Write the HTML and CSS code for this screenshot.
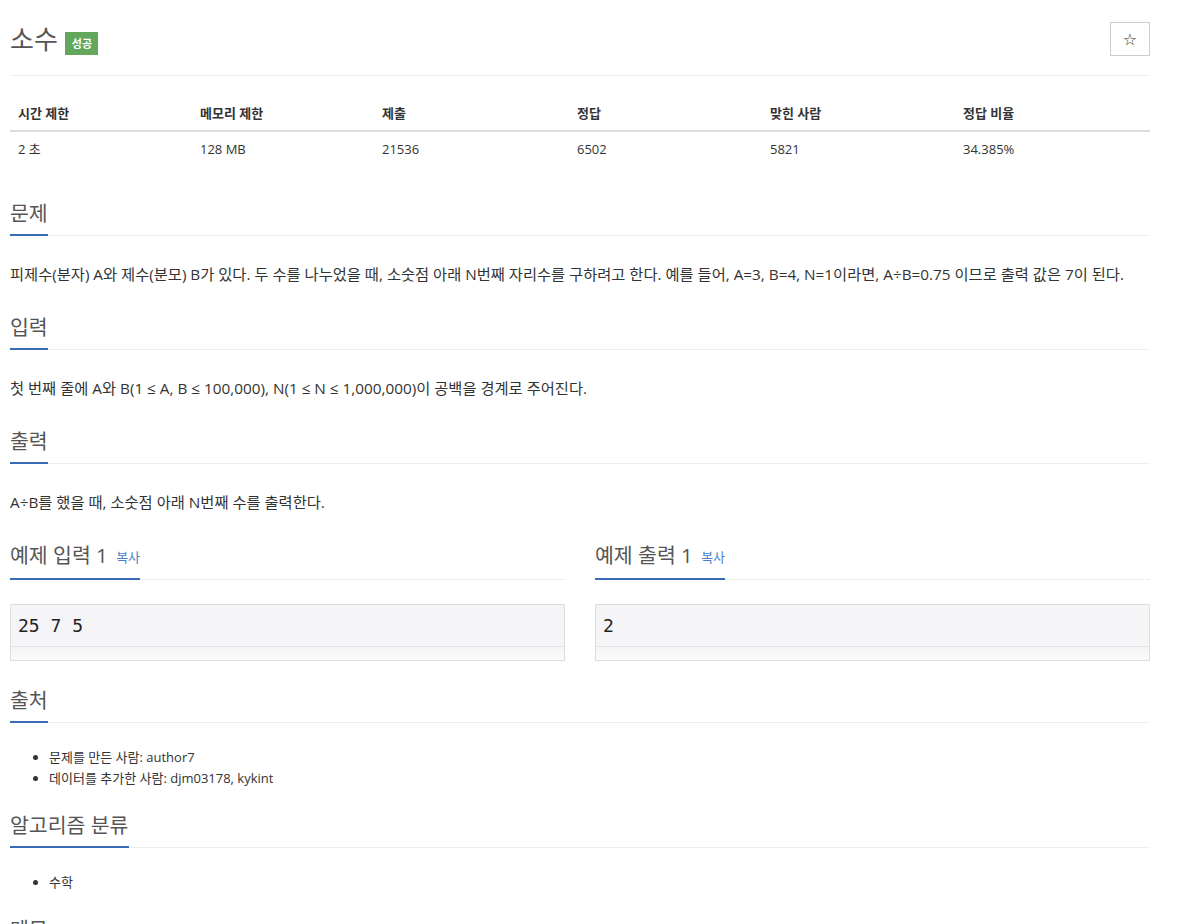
FILE: index.html
```html
<!DOCTYPE html>
<html lang="ko">
<head>
<meta charset="utf-8">
<title>소수</title>
<link rel="stylesheet" href="styles.css">
</head>
<body>
<div class="container">
  <div class="page-header">
    <h1 class="title">소수 <span class="badge">성공</span></h1>
    <button class="star-btn" type="button">☆</button>
  </div>

  <table class="info-table">
    <thead>
      <tr>
        <th class="c1">시간 제한</th>
        <th class="c2">메모리 제한</th>
        <th class="c3">제출</th>
        <th class="c4">정답</th>
        <th class="c5">맞힌 사람</th>
        <th class="c6">정답 비율</th>
      </tr>
    </thead>
    <tbody>
      <tr>
        <td>2 초</td>
        <td>128 MB</td>
        <td>21536</td>
        <td>6502</td>
        <td>5821</td>
        <td>34.385%</td>
      </tr>
    </tbody>
  </table>

  <section class="section first">
    <h2 class="headline"><span>문제</span></h2>
    <p class="text">피제수(분자) A와 제수(분모) B가 있다. 두 수를 나누었을 때, 소숫점 아래 N번째 자리수를 구하려고 한다. 예를 들어, A=3, B=4, N=1이라면, A÷B=0.75 이므로 출력 값은 7이 된다.</p>
  </section>

  <section class="section">
    <h2 class="headline"><span>입력</span></h2>
    <p class="text">첫 번째 줄에 A와 B(1 ≤ A, B ≤ 100,000), N(1 ≤ N ≤ 1,000,000)이 공백을 경계로 주어진다.</p>
  </section>

  <section class="section">
    <h2 class="headline"><span>출력</span></h2>
    <p class="text">A÷B를 했을 때, 소숫점 아래 N번째 수를 출력한다.</p>
  </section>

  <div class="samples">
    <section class="sample">
      <h2 class="headline"><span>예제 입력 1 <a class="copy" href="#">복사</a></span></h2>
      <div class="pre">
        <div class="pre-text">25 7 5</div>
        <div class="pre-scroll"></div>
      </div>
    </section>
    <section class="sample">
      <h2 class="headline"><span>예제 출력 1 <a class="copy" href="#">복사</a></span></h2>
      <div class="pre">
        <div class="pre-text">2</div>
        <div class="pre-scroll"></div>
      </div>
    </section>
  </div>

  <section class="section src">
    <h2 class="headline"><span>출처</span></h2>
    <ul class="list">
      <li>문제를 만든 사람: author7</li>
      <li>데이터를 추가한 사람: djm03178, kykint</li>
    </ul>
  </section>

  <section class="section list-section">
    <h2 class="headline"><span>알고리즘 분류</span></h2>
    <ul class="list">
      <li>수학</li>
    </ul>
  </section>

  <section class="section list-section">
    <h2 class="headline"><span>메모</span></h2>
  </section>
</div>
</body>
</html>
```

FILE: styles.css
```css
* {
  box-sizing: border-box;
}

body {
  margin: 0;
  background: #fff;
  color: #333;
  font-family: "Open Sans", "Noto Sans CJK KR", sans-serif;
}

.container {
  width: 1140px;
  margin-left: 10px;
}

.page-header {
  display: flex;
  justify-content: space-between;
  align-items: center;
  padding: 22px 0 19px;
  border-bottom: 1px solid #eee;
}

.title {
  margin: 0;
  font-size: 26px;
  font-weight: 400;
  line-height: 34px;
  color: #555;
  display: flex;
  align-items: center;
  gap: 7px;
}

.badge {
  display: inline-block;
  background: #62a75c;
  color: #fff;
  font-size: 11px;
  font-weight: 700;
  line-height: 23px;
  padding: 0 6px 0 7px;
  margin-top: 8px;
}

.star-btn {
  width: 40px;
  height: 34px;
  border: 1px solid #ccc;
  background: #fff;
  font-size: 16px;
  color: #333;
  padding: 0;
  font-family: "DejaVu Sans", sans-serif;
}

.info-table {
  margin-top: 20px;
  width: 100%;
  border-collapse: collapse;
  font-size: 13px;
}

.info-table th,
.info-table td {
  text-align: left;
  padding: 8px;
  line-height: 18px;
}

.info-table th {
  font-weight: 700;
  border-bottom: 2px solid #ddd;
}

.c1 { width: 182px; }
.c2 { width: 182px; }
.c3 { width: 195px; }
.c4 { width: 193px; }
.c5 { width: 193px; }

.section {
  margin-top: 30px;
}

.section.first {
  margin-top: 36px;
}

.headline {
  margin: 0;
  font-size: 20.5px;
  font-weight: 400;
  line-height: 22px;
  color: #555;
  border-bottom: 1px solid #eee;
}

.headline span {
  display: inline-block;
  padding-bottom: 10px;
  border-bottom: 2px solid #3a6bb5;
  margin-bottom: -1px;
}

.copy {
  font-size: 13px;
  color: #4a7fc8;
  text-decoration: none;
  vertical-align: 1px;
  margin-left: 3px;
}

.text {
  margin: 26px 0 0;
  font-size: 15.3px;
  line-height: 24px;
}

.samples {
  margin-top: 30px;
  display: grid;
  grid-template-columns: 1fr 1fr;
  column-gap: 30px;
}

.sample .headline {
  border-bottom: 1px dotted #ddd;
}

.pre {
  margin-top: 24px;
  border: 1px solid #ddd;
  background: #f5f5f7;
}

.pre-text {
  height: 41px;
  line-height: 41px;
  padding-left: 7px;
  font-family: "DejaVu Sans Mono", monospace;
  font-size: 18px;
  color: #222;
  white-space: pre;
}

.pre-scroll {
  height: 14px;
  border-top: 1px solid #e2e2e4;
  background: linear-gradient(#f4f4f6, #fbfbfb);
}

.section.src {
  margin-top: 28px;
}

.list {
  margin: 24px 0 0;
  padding-left: 39px;
  font-size: 13px;
  line-height: 21px;
}

.list-section {
  margin-top: 25px;
}
```
